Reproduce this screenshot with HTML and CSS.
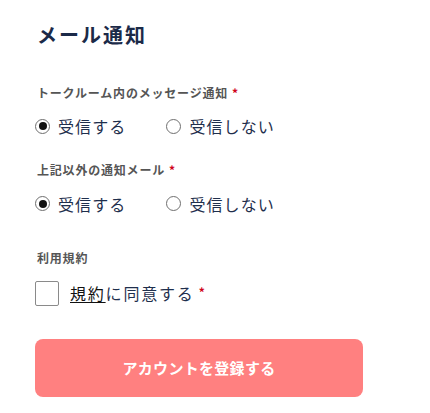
FILE: index.html
```html
<!DOCTYPE html>
<html lang="ja">
<head>
<meta charset="utf-8">
<title>メール通知</title>
<link rel="stylesheet" href="styles.css">
</head>
<body>
<main class="form">
  <h2 class="title">メール通知</h2>

  <div class="field field-first">
    <p class="label">トークルーム内のメッセージ通知<span class="req">*</span></p>
    <div class="options">
      <label class="option"><span class="radio checked"></span><span class="opt-text">受信する</span></label>
      <label class="option"><span class="radio"></span><span class="opt-text">受信しない</span></label>
    </div>
  </div>

  <div class="field field-second">
    <p class="label">上記以外の通知メール<span class="req">*</span></p>
    <div class="options">
      <label class="option"><span class="radio checked"></span><span class="opt-text">受信する</span></label>
      <label class="option"><span class="radio"></span><span class="opt-text">受信しない</span></label>
    </div>
  </div>

  <div class="field field-terms">
    <p class="label">利用規約</p>
    <label class="agree"><span class="checkbox"></span><span class="agree-text"><a class="terms-link">規約</a>に同意する</span><span class="req">*</span></label>
  </div>

  <button class="submit" type="button">アカウントを登録する</button>
</main>
</body>
</html>
```

FILE: styles.css
```css
html, body {
  margin: 0;
  padding: 0;
  background: #ffffff;
}

body {
  font-family: "Noto Sans CJK JP", "Noto Sans", sans-serif;
}

.form {
  width: 328px;
  padding: 20px 0 0 35px;
}

.title {
  margin: 0 0 0 2px;
  font-size: 20px;
  line-height: 30px;
  font-weight: 700;
  letter-spacing: 2px;
  color: #1b2a48;
}

.field-first {
  margin-top: 33.5px;
}

.field-second {
  margin-top: 25px;
}

.field-terms {
  margin-top: 35.5px;
}

.label {
  margin: 0 0 0 2px;
  font-size: 12px;
  line-height: 18px;
  font-weight: 700;
  letter-spacing: 0.8px;
  color: #555555;
}

.req {
  color: #d0021b;
  margin-left: 4px;
  font-weight: 700;
}

.options {
  display: flex;
  align-items: center;
  gap: 40px;
  margin-top: 14.5px;
  height: 20px;
}

.option {
  display: flex;
  align-items: center;
  gap: 8px;
}

.radio {
  box-sizing: border-box;
  width: 15px;
  height: 15px;
  border: 1px solid #6f6f6f;
  border-radius: 50%;
  display: flex;
  align-items: center;
  justify-content: center;
  background: #fff;
}

.radio.checked::after {
  content: "";
  width: 8px;
  height: 8px;
  border-radius: 50%;
  background: #111;
}

.opt-text {
  font-size: 16px;
  line-height: 20px;
  letter-spacing: 1.1px;
  color: #1f2f4d;
}

.agree {
  display: flex;
  align-items: center;
  margin-top: 13.5px;
  height: 25px;
}

.checkbox {
  box-sizing: border-box;
  width: 24px;
  height: 25px;
  border: 1px solid #8a8a8a;
  border-radius: 2px;
  margin-right: 11px;
  background: #fff;
}

.agree-text {
  font-size: 16px;
  line-height: 20px;
  letter-spacing: 1.8px;
  color: #1f2f4d;
}

.terms-link {
  color: #111;
  text-decoration: underline;
  text-underline-offset: 2px;
}

.agree .req {
  font-size: 12px;
  margin-left: 4px;
  align-self: flex-start;
  margin-top: 2px;
}

.submit {
  display: block;
  margin-top: 33px;
  width: 328px;
  height: 58px;
  border: none;
  border-radius: 8px;
  background: #ff8080;
  color: #ffffff;
  font-family: "Noto Sans CJK JP", "Noto Sans", sans-serif;
  font-size: 15px;
  font-weight: 700;
  letter-spacing: 0.3px;
}
```
